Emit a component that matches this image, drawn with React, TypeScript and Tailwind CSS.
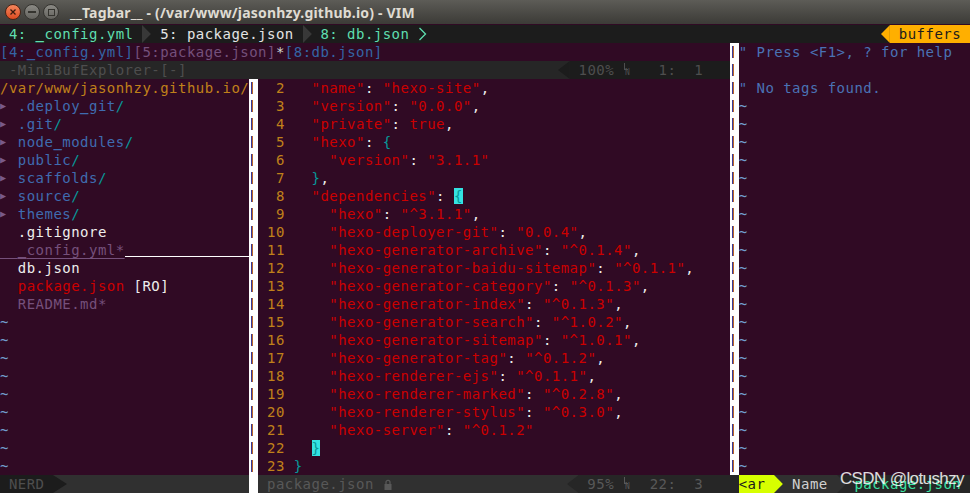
import React from "react";

type Tok = [string, string?];

const RED = "text-[#cc0000]";
const WHITE = "text-[#eeeeec]";
const TEAL = "text-[#06989a]";
const MATCH = "bg-[#34e2e2] text-[#06989a]";
const ROW = "h-[18px] leading-[18px] whitespace-pre";

function us(s: string) {
  const parts = s.split("_");
  return parts.map((p, i) => (
    <React.Fragment key={i}>
      {i > 0 && <span className="font-bold">_</span>}
      {p}
    </React.Fragment>
  ));
}

// one "key": "value" line
function kv(indent: number, key: string, val: string, comma: boolean): Tok[] {
  const t: Tok[] = [[" ".repeat(indent)], [`"${key}"`, RED], [": ", WHITE], [val, RED]];
  if (comma) t.push([",", WHITE]);
  return t;
}

const deps: [string, string][] = [
  ["hexo", "^3.1.1"],
  ["hexo-deployer-git", "0.0.4"],
  ["hexo-generator-archive", "^0.1.4"],
  ["hexo-generator-baidu-sitemap", "^0.1.1"],
  ["hexo-generator-category", "^0.1.3"],
  ["hexo-generator-index", "^0.1.3"],
  ["hexo-generator-search", "^1.0.2"],
  ["hexo-generator-sitemap", "^1.0.1"],
  ["hexo-generator-tag", "^0.1.2"],
  ["hexo-renderer-ejs", "^0.1.1"],
  ["hexo-renderer-marked", "^0.2.8"],
  ["hexo-renderer-stylus", "^0.3.0"],
  ["hexo-server", "^0.1.2"],
];

const code: Tok[][] = [
  kv(2, "name", '"hexo-site"', true),
  kv(2, "version", '"0.0.0"', true),
  kv(2, "private", "true", true),
  [["  "], ['"hexo"', RED], [": ", WHITE], ["{", TEAL]],
  kv(4, "version", '"3.1.1"', false),
  [["  "], ["}", TEAL], [",", WHITE]],
  [["  "], ['"dependencies"', RED], [": ", WHITE], ["{", MATCH]],
  ...deps.map(([k, v], i) => kv(4, k, `"${v}"`, i < deps.length - 1)),
  [["  "], ["}", MATCH]],
  [["}", TEAL]],
];

const dirs = [".deploy_git", ".git", "node_modules", "public", "scaffolds", "source", "themes"];

function Tri({ dir, fill, w = 9 }: { dir: "r" | "l"; fill: string; w?: number }) {
  const pts = dir === "r" ? `0,0 ${w},9 0,18` : `${w},0 0,9 ${w},18`;
  return (
    <svg width={w} height={18} className="block shrink-0">
      <polygon points={pts} fill={fill} />
    </svg>
  );
}

function LnSym() {
  return (
    <span className="relative inline-block h-[18px] w-[8.9px] align-top">
      <span className="absolute left-[1px] top-[2px] h-[7px] w-[4px] border-b border-l border-current" />
      <span className="absolute left-[2px] top-[7px] text-[8px] leading-[10px] tracking-normal">N</span>
    </span>
  );
}

function Sep({ rows, last }: { rows: number; last?: "white" | "dark" }) {
  return (
    <div className="flex w-[8.9px] shrink-0 flex-col">
      {Array.from({ length: rows }).map((_, i) => (
        <div key={i} className="flex h-[18px] items-center bg-white pl-[2px]">
          <div className="h-[12px] w-[1px] bg-[#3a3a9a]" />
          <div className="h-[12px] w-[1px] bg-[#b8652a]" />
        </div>
      ))}
      {last === "white" && <div className="h-[18px] bg-white" />}
      {last === "dark" && <div className="h-[18px] bg-[#262626]" />}
    </div>
  );
}

function Tilde({ n }: { n: number }) {
  return (
    <>
      {Array.from({ length: n }).map((_, i) => (
        <div key={i} className={`${ROW} text-[#729fcf]`}>~</div>
      ))}
    </>
  );
}

export default function App() {
  return (
    <div className="relative h-[493px] w-[970px] overflow-hidden bg-[#300a24]">
      {/* Window title bar */}
      <div className="flex h-[25px] items-center border-b border-[#300a24] bg-linear-to-b from-[#5d5c57] to-[#3c3b37]">
        <div className="flex gap-[3px] pl-[5px]">
          <div className="flex size-[16px] items-center justify-center rounded-full border border-[#4a2416] bg-linear-to-b from-[#f5865c] to-[#dc4a1e]">
            <svg width="6" height="6">
              <path d="M0.5 0.5L5.5 5.5M5.5 0.5L0.5 5.5" stroke="#3b1a0e" strokeWidth="1.3" />
            </svg>
          </div>
          <div className="flex size-[16px] items-center justify-center rounded-full border border-[#353430] bg-linear-to-b from-[#8b8a85] to-[#64635e]">
            <div className="h-[2px] w-[8px] bg-[#35342f]" />
          </div>
          <div className="flex size-[16px] items-center justify-center rounded-full border border-[#353430] bg-linear-to-b from-[#8b8a85] to-[#64635e]">
            <div className="size-[7px] border-[1.5px] border-[#35342f]" />
          </div>
        </div>
        <div className="ml-[11px] font-['Noto_Sans',sans-serif] text-[14px] font-bold tracking-[0.2px] text-[#dfdbd2]">
          __Tagbar__ - (/var/www/jasonhzy.github.io) - VIM
        </div>
      </div>

      <div className="font-['DejaVu_Sans_Mono',monospace] text-[14px] tracking-[0.4713px]">
        {/* Tabline */}
        <div className="flex h-[18px] items-stretch bg-[#1c1c1c] leading-[18px]">
          <span className="whitespace-pre text-[#5fdfaf]">{us(" 4: _config.yml ")}</span>
          <Tri dir="r" fill="#383838" w={8.9} />
          <span className="whitespace-pre text-[#e4e4e4]"> 5: package.json </span>
          <Tri dir="r" fill="#383838" w={8.9} />
          <span className="whitespace-pre text-[#5fdfaf]"> 8: db.json </span>
          <svg width="8.9" height="18" className="block">
            <polyline points="1.5,3 7.5,9 1.5,15" fill="none" stroke="#5fdfaf" strokeWidth="1.3" />
          </svg>
          <div className="flex-1" />
          <Tri dir="l" fill="#ffaf00" w={8.9} />
          <span className="whitespace-pre bg-[#ffaf00] text-[#1c1c1c]"> buffers </span>
        </div>

        <div className="flex h-[450px]">
          {/* Left block: minibuf + nerdtree + code */}
          <div className="flex w-[729.8px] shrink-0 flex-col">
            <div className={ROW}>
              <span className="text-[#3465a4]">{us("[4:_config.yml]")}</span>
              <span className="text-[#75507b]">[5:package.json]</span>
              <span className="text-[#d3d7cf]">*</span>
              <span className="text-[#3465a4]">[8:db.json]</span>
            </div>
            <div className="flex h-[18px] bg-[#262626] leading-[18px] text-[#4e4e4e]">
              <span className="w-[551.8px] whitespace-pre"> -MiniBufExplorer-[-]</span>
              <div className="flex w-[17.8px]">
                <div className="w-[6px]" />
                <Tri dir="l" fill="#1c1c1c" w={11.8} />
              </div>
              <span className="flex-1 whitespace-pre bg-[#1c1c1c]">
                {" 100% "}
                <LnSym />
                {"   1:  1"}
              </span>
            </div>

            <div className="flex flex-1">
              {/* NERDTree */}
              <div className="flex w-[249.2px] shrink-0 flex-col">
                <div className={`${ROW} text-[#c0811a]`}>/var/www/jasonhzy.github.io/</div>
                {dirs.map((d) => (
                  <div key={d} className={ROW}>
                    <span className="inline-block w-[8.9px] align-top text-[10px] tracking-normal text-[#7a5a88]">▶</span>
                    {" "}
                    <span className="text-[#3f6cb0]">{us(d)}</span>
                    <span className="text-[#06989a]">/</span>
                  </div>
                ))}
                <div className={`${ROW} text-[#eeeeec]`}>  .gitignore</div>
                <div className="flex h-[18px] leading-[18px]">
                  <span className="whitespace-pre text-[#75507b] underline decoration-[#75507b] underline-offset-[3px]">{us("  _config.yml*")}</span>
                  <span className="mb-[2px] flex-1 border-b border-white" />
                </div>
                <div className={`${ROW} text-[#eeeeec]`}>  db.json</div>
                <div className={ROW}>
                  <span className="text-[#cc0000]">  package.json</span>
                  <span className="text-[#eeeeec]"> [RO]</span>
                </div>
                <div className={`${ROW} text-[#75507b]`}>  README.md*</div>
                <Tilde n={9} />
                <div className="flex h-[18px] bg-[#303030] leading-[18px]">
                  <span className="w-[53.4px] whitespace-pre bg-[#1c1c1c] text-[#4e4e4e]"> NERD</span>
                  <Tri dir="r" fill="#1c1c1c" w={14} />
                </div>
              </div>

              <Sep rows={22} last="white" />

              {/* Code window */}
              <div className="flex w-[471.7px] shrink-0 flex-col">
                {code.map((toks, i) => (
                  <div key={i} className={ROW}>
                    <span className="text-[#c0811a]">{String(i + 2).padStart(3)} </span>
                    {toks.map(([t, c], j) => (
                      <span key={j} className={c}>{t}</span>
                    ))}
                  </div>
                ))}
                <div className="flex h-[18px] bg-[#303030] leading-[18px] text-[#585858]">
                  <span className="flex w-[293.7px] items-center whitespace-pre">
                    {" package.json "}
                    <svg width="8" height="11" className="ml-[1px]">
                      <path d="M2 5V3.3a2 2 0 0 1 4 0V5" fill="none" stroke="#585858" strokeWidth="1.3" />
                      <rect x="0.5" y="5" width="7" height="6" fill="#585858" />
                    </svg>
                  </span>
                  <div className="flex-1" />
                  <div className="flex w-[17.8px]">
                    <div className="w-[6px]" />
                    <Tri dir="l" fill="#262626" w={11.8} />
                  </div>
                  <span className="w-[151.3px] whitespace-pre bg-[#262626]">
                    {" 95% "}
                    <LnSym />
                    {"  22:  3"}
                  </span>
                </div>
              </div>
            </div>
          </div>

          <Sep rows={24} last="dark" />

          {/* Tagbar */}
          <div className="flex flex-1 flex-col">
            <div className={`${ROW} text-[#4a72b4]`}>" Press &lt;F1&gt;, ? for help</div>
            <div className={ROW} />
            <div className={`${ROW} text-[#4a72b4]`}>" No tags found.</div>
            <Tilde n={21} />
            <div className="flex h-[18px] bg-[#262626] leading-[18px]">
              <span className="whitespace-pre bg-[#d7ff00] text-[#1c1c1c]">&lt;ar </span>
              <div className="bg-[#303030]">
                <Tri dir="r" fill="#d7ff00" w={8.9} />
              </div>
              <span className="whitespace-pre bg-[#303030] text-[#d0d0d0]"> Name </span>
              <Tri dir="r" fill="#303030" w={8.9} />
              <span className="whitespace-pre text-[#3be3a3]"> package.json</span>
            </div>
          </div>
        </div>
      </div>

      {/* watermark */}
      <div className="absolute bottom-[3px] right-[6px] font-['Liberation_Sans',sans-serif] text-[17px] leading-[22px] tracking-[-0.6px] text-white/85">
        CSDN @lotushzy
      </div>
    </div>
  );
}
